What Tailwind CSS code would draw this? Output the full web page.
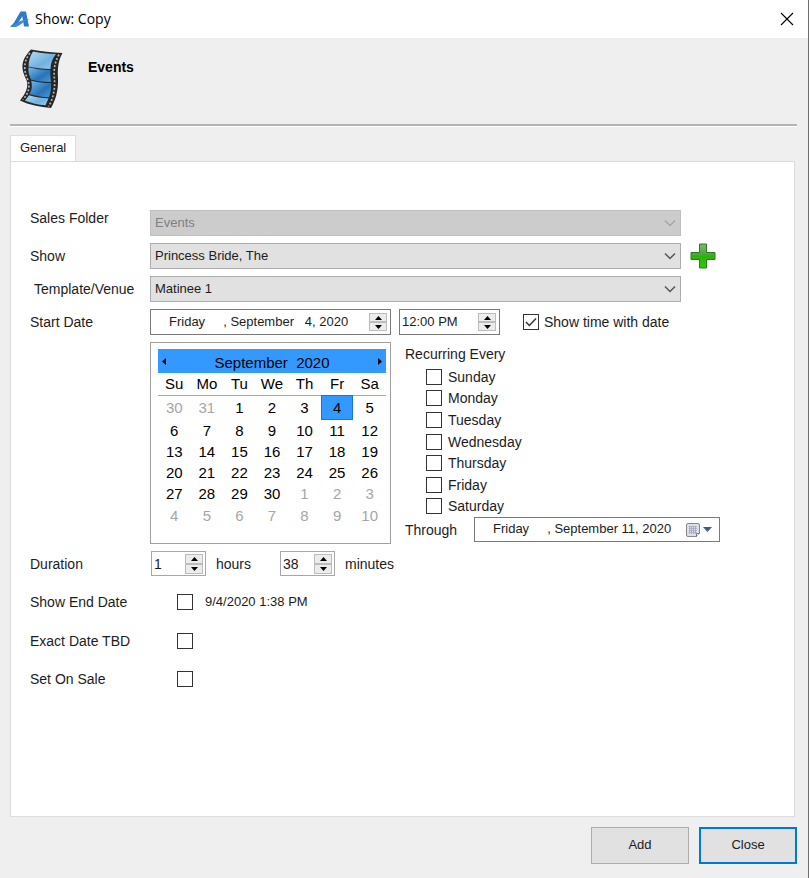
<!DOCTYPE html>
<html lang="en">
<head>
<meta charset="utf-8">
<title>Show: Copy</title>
<script src="https://cdn.jsdelivr.net/npm/@tailwindcss/browser@4"></script>
</head>
<body class="flex min-h-screen flex-col border-r border-[#6e6e6e] bg-[#efefef] font-['Liberation_Sans',Arial,sans-serif] text-sm text-[#1c1c1c]">
<header class="flex h-[38px] items-center bg-white pl-[10px] pr-[14px]">
  <svg class="h-[17px] w-[20px]" viewBox="0 0 20 17" aria-hidden="true">
    <path d="M10.500 0.500H16L19 15.500H14L13.200 10.500 12.300 5.500 8 12C5.500 15.500 3 16.500 0.300 15.200 3.500 13.500 5 10 7 6.500Z" fill="#2f7cc6"/>
    <path d="M0.300 15.200C6 13.500 8 8.800 19.800 8 15 9.800 12.500 12 9 14.500 6 16.500 3 16.500 0.300 15.200Z" fill="#3f8bd0"/>
  </svg>
  <h1 class="ml-[5px] flex-1 font-['Open_Sans',sans-serif] text-sm text-black">Show: Copy</h1>
  <button type="button" aria-label="Close window" class="flex size-[14px] items-center justify-center">
    <svg class="size-[14px]" viewBox="0 0 14 14" fill="none" stroke="#000" stroke-width="1.1"><path d="M1 1l12 12M13 1L1 13"/></svg>
  </button>
</header>

<section class="ml-[10px] mr-[11px] flex h-[88px] items-start border-b-2 border-[#b4b4b4] pl-[10px] pt-[11px] shadow-[0_1px_0_#fff]">
  <svg class="h-[61px] w-[44px]" viewBox="0 0 44 61" aria-hidden="true">
    <defs>
      <linearGradient id="sky" x1="0" y1="0" x2="1" y2="1"><stop offset="0" stop-color="#b5daf3"/><stop offset=".6" stop-color="#71b0e0"/><stop offset="1" stop-color="#9acbee"/></linearGradient>
      <linearGradient id="deep" x1="0" y1="0" x2="1" y2="1"><stop offset="0" stop-color="#7bbbe8"/><stop offset=".6" stop-color="#2673b8"/><stop offset="1" stop-color="#4d99d6"/></linearGradient>
    </defs>
    <path d="M11 0.500C21 2.500 32 3.500 42.500 4 38 12 37.500 20 38 29 38.500 42 35.500 51 31 59 20 58 9 56 0 51.500 5 45 9 39 6.500 31 1 20 0 12 11 0.500Z" fill="#262626"/>
    <path d="M13 2.500C20 4 28 4.800 36 5 32 10 30.500 15 30.500 20 22 20 15 19 8.500 17.500 8.500 12 10 7 13 2.500Z" fill="url(#sky)"/>
    <path d="M8.500 18.300C15 20 22 21 30.500 20.900 30 25 30.500 29 31 33 24 33 17 32.300 11 30.500 9 26 8 23 8.500 18.300Z" fill="url(#deep)"/>
    <path d="M11.200 31.700C17 33.300 24 34 31 34 31.500 39 30.500 44 29 48.200 22 48 15 47 9.500 45 12 41 12.500 37 11.200 31.700Z" fill="url(#deep)"/>
    <path d="M9 46.200C15 48 22 49.200 28.600 49.300L25.500 56.300C18 55.800 11 54 5 51.800Z" fill="url(#sky)"/>
    <path d="M10 4C3 13 4 22 7.500 30 10.500 38 8.500 44 3 50.800M39 5.500C33 16 34 25 34.700 34 34.500 44 32 52 28.500 57.500" fill="none" stroke="#b5b5b5" stroke-width="1.700" stroke-dasharray="2 1.800"/>
  </svg>
  <h2 class="ml-[24px] mt-2 text-sm font-bold text-black">Events</h2>
</section>

<main class="ml-[10px] mr-[13px] mt-[9px] flex flex-1 flex-col">
  <div role="tablist" class="flex">
    <button type="button" role="tab" aria-selected="true" class="-mb-px h-[27px] border border-b-0 border-[#dcdcdc] bg-white px-[9px] pb-[2px] text-[13px]">General</button>
  </div>
  <form class="flex flex-1 flex-col gap-[7px] border border-[#dcdcdc] bg-white pb-4 pl-[19px] pr-[74px] pt-[48px]">
    <div class="grid grid-cols-[120px_1fr_39px] items-center">
      <label for="folder" class="self-start leading-4">Sales Folder</label>
      <div class="grid items-center">
        <select id="folder" disabled class="col-start-1 row-start-1 h-[26px] w-full appearance-none border border-[#bfbfbf] bg-[#cccccc] px-1 text-[13px] text-[#808080] opacity-100"><option>Events</option></select>
        <svg class="pointer-events-none col-start-1 row-start-1 mr-[5px] h-[8px] w-[12px] justify-self-end" viewBox="0 0 12 8" fill="none" stroke="#a5a5a5" stroke-width="1.500"><path d="M1 1.500l5 5 5-5"/></svg>
      </div>
    </div>
    <div class="grid grid-cols-[120px_1fr_39px] items-center">
      <label for="show">Show</label>
      <div class="grid items-center">
        <select id="show" class="col-start-1 row-start-1 h-[26px] w-full appearance-none border border-[#adadad] bg-[#e1e1e1] px-1 text-[13px]"><option>Princess Bride, The</option></select>
        <svg class="pointer-events-none col-start-1 row-start-1 mr-[5px] h-[8px] w-[12px] justify-self-end" viewBox="0 0 12 8" fill="none" stroke="#555" stroke-width="1.500"><path d="M1 1.500l5 5 5-5"/></svg>
      </div>
      <button type="button" aria-label="Add show" class="ml-[9px] size-[26px]">
        <svg class="size-[26px]" viewBox="0 0 26 26"><defs><linearGradient id="plus" x1="0" y1="0" x2="0" y2="1"><stop offset="0" stop-color="#7fb774"/><stop offset=".48" stop-color="#45a52f"/><stop offset=".52" stop-color="#27b408"/><stop offset="1" stop-color="#2fcb0c"/></linearGradient></defs><path d="M9.500 1h7v8.500H25v7h-8.500V25h-7v-8.500H1v-7h8.500Z" fill="url(#plus)" stroke="#2c7a1e"/></svg>
      </button>
    </div>
    <div class="grid grid-cols-[120px_1fr_39px] items-center">
      <label for="venue" class="pl-1">Template/Venue</label>
      <div class="grid items-center">
        <select id="venue" class="col-start-1 row-start-1 h-[26px] w-full appearance-none border border-[#adadad] bg-[#e1e1e1] px-1 text-[13px]"><option>Matinee 1</option></select>
        <svg class="pointer-events-none col-start-1 row-start-1 mr-[5px] h-[8px] w-[12px] justify-self-end" viewBox="0 0 12 8" fill="none" stroke="#555" stroke-width="1.500"><path d="M1 1.500l5 5 5-5"/></svg>
      </div>
    </div>
    <div class="flex items-center">
      <label for="start" class="w-[120px]">Start Date</label>
      <div class="flex h-[26px] w-[241px] items-center border border-[#7a7a7a] pr-[3px]">
        <input id="start" type="text" value="Friday     , September   4, 2020" class="min-w-0 flex-1 pl-[18px] text-[13px] outline-none">
        <div class="flex w-[18px] flex-col">
          <button type="button" aria-label="Later date" class="flex h-[9px] items-center justify-center border border-[#bcbcbc] bg-[#ececec]"><svg class="h-[4px] w-[7px]" viewBox="0 0 7 4"><path d="M3.500 0L7 4H0Z"/></svg></button>
          <button type="button" aria-label="Earlier date" class="flex h-[9px] items-center justify-center border border-[#bcbcbc] bg-[#ececec]"><svg class="h-[4px] w-[7px]" viewBox="0 0 7 4"><path d="M0 0h7L3.500 4Z"/></svg></button>
        </div>
      </div>
      <div class="ml-2 flex h-[26px] w-[101px] items-center border border-[#7a7a7a] pr-[3px]">
        <input type="text" aria-label="Start time" value="12:00 PM" class="min-w-0 flex-1 pl-[2px] text-[13px] outline-none">
        <div class="flex w-[18px] flex-col">
          <button type="button" aria-label="Later time" class="flex h-[9px] items-center justify-center border border-[#bcbcbc] bg-[#ececec]"><svg class="h-[4px] w-[7px]" viewBox="0 0 7 4"><path d="M3.500 0L7 4H0Z"/></svg></button>
          <button type="button" aria-label="Earlier time" class="flex h-[9px] items-center justify-center border border-[#bcbcbc] bg-[#ececec]"><svg class="h-[4px] w-[7px]" viewBox="0 0 7 4"><path d="M0 0h7L3.500 4Z"/></svg></button>
        </div>
      </div>
      <label class="ml-[23px] flex items-center gap-[5px]">
        <span class="grid items-center justify-items-center">
          <input type="checkbox" checked class="peer col-start-1 row-start-1 size-4 appearance-none border border-[#333] bg-white">
          <svg class="pointer-events-none col-start-1 row-start-1 hidden size-3 peer-checked:block" viewBox="0 0 12 12" fill="none" stroke="#333" stroke-width="1.500"><path d="M1 6l3.300 3.500L11 2.500"/></svg>
        </span>
        Show time with date
      </label>
    </div>

    <div class="flex pl-[120px]">
      <div class="h-[202px] w-[241px] shrink-0 border border-[#a0a0a0] pl-[7px] pr-[4px] pt-[6px] text-[15px] text-black">
        <div class="flex h-[24px] items-center bg-[#3399ff] px-[4px]">
          <button type="button" aria-label="Previous month"><svg class="h-[7px] w-[4px]" viewBox="0 0 4 7"><path d="M4 0v7L0 3.500Z"/></svg></button>
          <span class="flex-1 pt-1 text-center whitespace-pre">September  2020</span>
          <button type="button" aria-label="Next month"><svg class="h-[7px] w-[4px]" viewBox="0 0 4 7"><path d="M0 0v7L4 3.500Z"/></svg></button>
        </div>
        <table class="w-full table-fixed border-collapse text-center leading-5">
          <thead><tr class="h-[22px] border-b border-[#a8a8a8]"><th class="font-normal">Su</th><th class="font-normal">Mo</th><th class="font-normal">Tu</th><th class="font-normal">We</th><th class="font-normal">Th</th><th class="font-normal">Fr</th><th class="font-normal">Sa</th></tr></thead>
          <tbody>
            <tr class="h-[25px]"><td class="text-[#a6a6a6]">30</td><td class="text-[#a6a6a6]">31</td><td>1</td><td>2</td><td>3</td><td class="bg-[#3399ff] outline outline-1 -outline-offset-1 outline-[#1478d4]">4</td><td>5</td></tr>
            <tr class="h-[21px]"><td>6</td><td>7</td><td>8</td><td>9</td><td>10</td><td>11</td><td>12</td></tr>
            <tr class="h-[21px]"><td>13</td><td>14</td><td>15</td><td>16</td><td>17</td><td>18</td><td>19</td></tr>
            <tr class="h-[21px]"><td>20</td><td>21</td><td>22</td><td>23</td><td>24</td><td>25</td><td>26</td></tr>
            <tr class="h-[22px]"><td>27</td><td>28</td><td>29</td><td>30</td><td class="text-[#a6a6a6]">1</td><td class="text-[#a6a6a6]">2</td><td class="text-[#a6a6a6]">3</td></tr>
            <tr class="h-[21px] text-[#a6a6a6]"><td>4</td><td>5</td><td>6</td><td>7</td><td>8</td><td>9</td><td>10</td></tr>
          </tbody>
        </table>
      </div>
      <div class="ml-[14px] flex h-[200px] min-w-0 flex-1 flex-col">
        <div class="h-[24px] leading-6">Recurring Every</div>
        <div class="flex flex-1 flex-col pl-[21px] leading-5">
          <label class="flex flex-1 items-center gap-[6px]"><input type="checkbox" class="size-4 appearance-none border border-[#333] bg-white checked:bg-[#333]">Sunday</label>
          <label class="flex flex-1 items-center gap-[6px]"><input type="checkbox" class="size-4 appearance-none border border-[#333] bg-white checked:bg-[#333]">Monday</label>
          <label class="flex flex-1 items-center gap-[6px]"><input type="checkbox" class="size-4 appearance-none border border-[#333] bg-white checked:bg-[#333]">Tuesday</label>
          <label class="flex flex-1 items-center gap-[6px]"><input type="checkbox" class="size-4 appearance-none border border-[#333] bg-white checked:bg-[#333]">Wednesday</label>
          <label class="flex flex-1 items-center gap-[6px]"><input type="checkbox" class="size-4 appearance-none border border-[#333] bg-white checked:bg-[#333]">Thursday</label>
          <label class="flex flex-1 items-center gap-[6px]"><input type="checkbox" class="size-4 appearance-none border border-[#333] bg-white checked:bg-[#333]">Friday</label>
          <label class="flex flex-1 items-center gap-[6px]"><input type="checkbox" class="size-4 appearance-none border border-[#333] bg-white checked:bg-[#333]">Saturday</label>
        </div>
        <div class="flex items-center">
          <label for="through" class="w-[69px]">Through</label>
          <div class="flex h-[25px] min-w-0 flex-1 items-center border border-[#7a7a7a] pr-[7px]">
            <input id="through" type="text" value="Friday     , September 11, 2020" class="min-w-0 flex-1 pl-[18px] text-[13px] outline-none">
            <button type="button" aria-label="Open calendar" class="flex items-center gap-[3px]">
              <svg class="size-[14px]" viewBox="0 0 14 14"><path d="M2 .5h10Q13.500.5 13.500 2v8.500l-3 3H2Q.5 13.500.5 12V2Q.5.5 2 .5Z" fill="#dde0e8" stroke="#8b8587"/><path d="M3 3.500h8M3 5.500h8M3 7.500h8M3 9.500h8M3.500 3v8M5.500 3v8M7.500 3v8M9.500 3v8" stroke="#9aa3b8" stroke-width=".7"/><path d="M10.500 13.500v-3h3" fill="#fff" stroke="#777"/></svg>
              <svg class="h-[5px] w-[9px]" viewBox="0 0 9 5"><path d="M0 0h9L4.500 5Z" fill="#3c5a8c"/></svg>
            </button>
          </div>
        </div>
      </div>
    </div>

    <div class="flex items-center">
      <label for="hours" class="w-[121px]">Duration</label>
      <div class="flex h-[25px] w-[55px] items-center border border-[#a5a7ad] pr-[2px]">
        <input id="hours" type="text" value="1" class="min-w-0 flex-1 pl-[2px] text-sm outline-none">
        <div class="flex w-[18px] flex-col">
          <button type="button" aria-label="More hours" class="flex h-[10px] items-center justify-center border border-[#bcbcbc] bg-[#ececec]"><svg class="h-[4px] w-[7px]" viewBox="0 0 7 4"><path d="M3.500 0L7 4H0Z"/></svg></button>
          <button type="button" aria-label="Fewer hours" class="flex h-[10px] items-center justify-center border border-[#bcbcbc] bg-[#ececec]"><svg class="h-[4px] w-[7px]" viewBox="0 0 7 4"><path d="M0 0h7L3.500 4Z"/></svg></button>
        </div>
      </div>
      <span class="ml-[10px] w-[64px]">hours</span>
      <div class="flex h-[25px] w-[55px] items-center border border-[#a5a7ad] pr-[2px]">
        <input type="text" aria-label="Duration minutes" value="38" class="min-w-0 flex-1 pl-[2px] text-sm outline-none">
        <div class="flex w-[18px] flex-col">
          <button type="button" aria-label="More minutes" class="flex h-[10px] items-center justify-center border border-[#bcbcbc] bg-[#ececec]"><svg class="h-[4px] w-[7px]" viewBox="0 0 7 4"><path d="M3.500 0L7 4H0Z"/></svg></button>
          <button type="button" aria-label="Fewer minutes" class="flex h-[10px] items-center justify-center border border-[#bcbcbc] bg-[#ececec]"><svg class="h-[4px] w-[7px]" viewBox="0 0 7 4"><path d="M0 0h7L3.500 4Z"/></svg></button>
        </div>
      </div>
      <span class="ml-[10px]">minutes</span>
    </div>
    <div class="flex flex-col">
      <div class="flex h-[38px] items-center"><label for="end" class="w-[147px]">Show End Date</label><input id="end" type="checkbox" class="size-4 appearance-none border border-[#333] bg-white checked:bg-[#333]"><span class="ml-3 text-[13px]">9/4/2020 1:38 PM</span></div>
      <div class="flex h-[39px] items-center"><label for="tbd" class="w-[147px]">Exact Date TBD</label><input id="tbd" type="checkbox" class="size-4 appearance-none border border-[#333] bg-white checked:bg-[#333]"></div>
      <div class="flex h-[38px] items-center"><label for="sale" class="w-[147px]">Set On Sale</label><input id="sale" type="checkbox" class="size-4 appearance-none border border-[#333] bg-white checked:bg-[#333]"></div>
    </div>
  </form>
</main>

<footer class="flex justify-end gap-[10px] pb-[14px] pr-[11px] pt-[10px] text-[13px]">
  <button type="button" class="h-[37px] w-[98px] border border-[#adadad] bg-[#e1e1e1]">Add</button>
  <button type="button" class="h-[37px] w-[98px] border-2 border-[#0078d7] bg-[#e1e1e1]">Close</button>
</footer>
</body>
</html>
